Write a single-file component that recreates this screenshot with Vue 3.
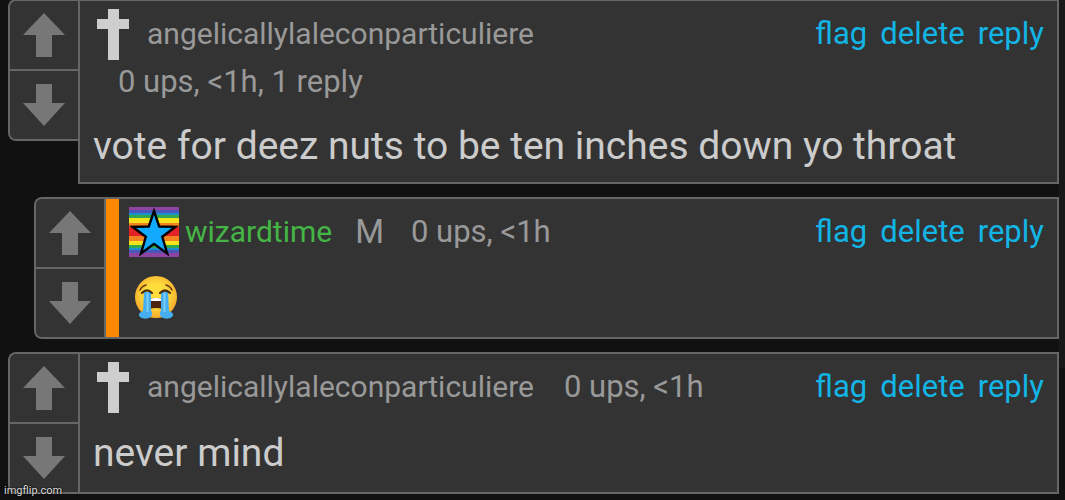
<script setup>
const comments = [
  {
    id: 1,
    user: 'angelicallylaleconparticuliere',
    icon: 'cross',
    meta: '0 ups, <1h, 1 reply',
    text: 'vote for deez nuts to be ten inches down yo throat',
  },
  {
    id: 2,
    user: 'wizardtime',
    icon: 'star',
    badge: 'M',
    meta: '0 ups, <1h',
    emoji: true,
    nested: true,
  },
  {
    id: 3,
    user: 'angelicallylaleconparticuliere',
    icon: 'cross',
    meta: '0 ups, <1h',
    text: 'never mind',
  },
]
const actions = ['flag', 'delete', 'reply']
const rainbow = [
  '#8e44a0', '#4a56b8', '#1c8fd0', '#2fa84f', '#f4e21c', '#f58220', '#e32228', '#e32228',
  '#f58220', '#f4e21c', '#2fa84f', '#1c8fd0', '#4a56b8', '#8e44a0',
]
const stripeTops = [0, 3, 6, 8, 11, 16, 20, 25, 29, 34, 38, 41, 43, 46, 50]
</script>

<template>
  <main class="page">
    <article v-for="c in comments" :key="c.id" class="comment" :class="{ nested: c.nested }">
      <div class="votes">
        <button type="button" aria-label="Upvote">
          <svg width="42" height="44" viewBox="0 0 42 44"><path d="M21 0 42 22H29V44H13V22H0Z" /></svg>
        </button>
        <button type="button" aria-label="Downvote">
          <svg width="42" height="42" viewBox="0 0 42 42"><path d="M21 42 0 19H13V0H29V19H42Z" /></svg>
        </button>
      </div>
      <div class="body">
        <header>
          <div class="info">
            <svg v-if="c.icon === 'cross'" class="avatar" viewBox="0 0 50 50" aria-hidden="true">
              <path fill="#cecece" d="M17 0H28V10H38V20H28V51H17V20H6V10H17Z" />
            </svg>
            <svg v-else class="avatar" viewBox="0 0 50 50" aria-hidden="true">
              <rect
                v-for="(color, i) in rainbow" :key="i" x="0" :y="stripeTops[i]" width="50"
                :height="stripeTops[i + 1] - stripeTops[i]" :fill="color"
              />
              <path
                fill="#12aaff" stroke="#000" stroke-width="2.4"
                d="M25 4 30.2 19.5 46.5 19.8 33.3 29.8 38.2 46.5 25 36.9 12 46.5 16.8 29.8 3.5 19.8 19.8 19.5Z"
              />
            </svg>
            <a class="user" href="#">{{ c.user }}</a>
            <span v-if="c.badge" class="badge">{{ c.badge }}</span>
            <span class="meta">{{ c.meta }}</span>
          </div>
          <nav class="actions">
            <a v-for="a in actions" :key="a" href="#">{{ a }}</a>
          </nav>
        </header>
        <div class="text">
          <svg v-if="c.emoji" class="emoji" viewBox="0 0 44 44" role="img" aria-label="Loudly crying face">
            <defs>
              <radialGradient id="face" cx="50%" cy="45%" r="55%">
                <stop offset="0.5" stop-color="#fddc3c" />
                <stop offset="1" stop-color="#f5a92e" />
              </radialGradient>
            </defs>
            <circle cx="22" cy="21" r="21" fill="url(#face)" />
            <path d="M15 23Q22 21 29 23V33Q22 31 15 33Z" fill="#4b2410" />
            <path d="M15 23Q22 21 29 23V25H15Z" fill="#fff" />
            <path d="M10 16H17V34Q20 40 15 42Q8 44 5 40Q4 37 9 35Z" fill="#45aef0" />
            <path d="M34 16H27V34Q24 40 29 42Q36 44 39 40Q40 37 35 35Z" fill="#45aef0" />
            <path d="M13.5 17V36M30.5 17V36" fill="none" stroke="#7bd0fa" stroke-width="2" />
            <path
              d="M8 17Q13 12 18 17M26 17Q31 12 36 17" fill="none" stroke="#4a2b0d"
              stroke-width="2.2" stroke-linecap="round"
            />
            <path
              d="M6 14Q8 10 12 9M38 14Q36 10 32 9" fill="none" stroke="#6b3f12"
              stroke-width="1.6" stroke-linecap="round"
            />
          </svg>
          <template v-else>{{ c.text }}</template>
        </div>
      </div>
    </article>
    <div class="scrollbar"></div>
    <div class="watermark">imgflip.com</div>
  </main>
</template>

<style>
body {
  margin: 0;
  background: #111;
}
</style>

<style scoped>
.page {
  position: relative;
  box-sizing: border-box;
  min-height: 100vh;
  display: flex;
  flex-direction: column;
  gap: 13px;
  padding: 0 6px 6px 8px;
  overflow: hidden;
  background: #111;
  font-family: Roboto, "Liberation Sans", sans-serif;
  font-size: 31px;
  color: #999;
}
.comment {
  display: flex;
  align-items: flex-start;
}
.comment:first-child {
  margin-top: -1px;
}
.nested {
  margin-left: 26px;
}
.votes {
  box-sizing: border-box;
  width: 70px;
  flex: none;
  border: 2px solid #666;
  border-right: 0;
  border-radius: 8px 0 0 8px;
  background: #333;
  overflow: hidden;
}
.votes button {
  display: flex;
  align-items: center;
  justify-content: center;
  width: 100%;
  height: 68px;
  padding: 0;
  border: 0;
  background: #333;
  cursor: pointer;
}
.votes button + button {
  height: 70px;
  border-top: 2px solid #666;
}
.votes path {
  fill: #777;
}
.body {
  box-sizing: border-box;
  flex: 1;
  min-width: 0;
  min-height: 142px;
  padding: 8px 13px 10px 11px;
  border: 2px solid #666;
  background: #333;
}
.nested .body {
  position: relative;
  padding-left: 23px;
}
.nested .body::before {
  content: "";
  position: absolute;
  top: 0;
  bottom: 0;
  left: 0;
  width: 13px;
  background: #ff8800;
}
header {
  display: flex;
  align-items: flex-start;
}
.info {
  flex: 1;
  min-width: 0;
  display: flex;
  flex-wrap: wrap;
  align-items: center;
}
.avatar {
  width: 50px;
  height: 50px;
  overflow: visible;
}
a {
  text-decoration: none;
}
.user {
  margin: 0 3px 0 6px;
  font-size: 30px;
  line-height: 46px;
  color: #999;
}
.nested .user {
  color: #45b545;
}
.badge {
  margin-left: 20px;
  font-size: 33px;
  line-height: 46px;
}
.meta {
  margin-left: 27px;
  line-height: 46px;
}
.actions {
  display: flex;
  gap: 13px;
  padding-left: 13px;
  line-height: 50px;
}
.actions a {
  color: #12b5e5;
}
.text {
  margin-top: 15px;
  padding-left: 2px;
  font-size: 39px;
  line-height: 52px;
  color: #ccc;
}
.emoji {
  display: block;
  width: 44px;
  height: 44px;
  padding: 4px 3px;
}
.scrollbar {
  position: absolute;
  top: 0;
  right: 0;
  width: 6px;
  height: 368px;
  background: #191919;
}
.watermark {
  position: absolute;
  left: 4px;
  bottom: 2px;
  font-size: 11px;
  line-height: 14px;
  color: #ddd;
  text-shadow: 0 0 2px #000, 0 0 1px #000;
}
</style>
